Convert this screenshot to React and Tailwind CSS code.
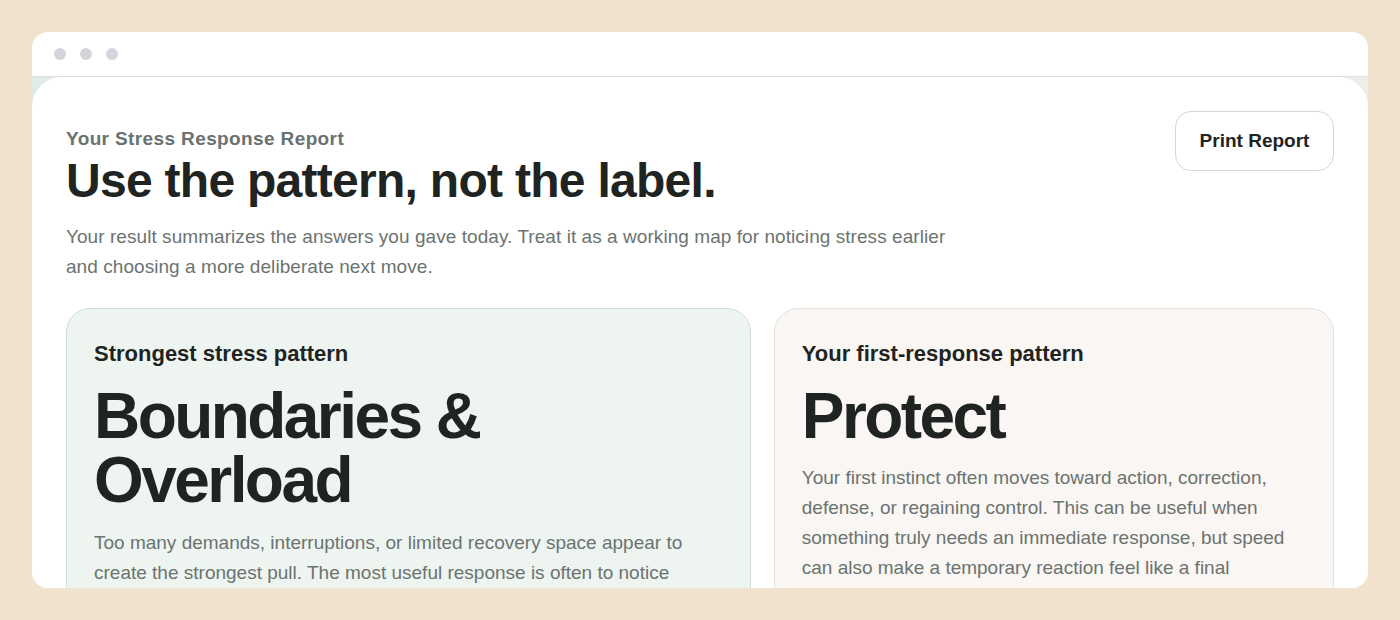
export default function App() {
  return (
    <div className="min-h-screen bg-[#f0e2cd] pt-8 px-8" style={{ fontFamily: '"Liberation Sans", Arial, sans-serif' }}>
      <div className="h-[556px] rounded-2xl overflow-hidden bg-white flex flex-col">
        {/* title bar */}
        <div className="h-[45px] shrink-0 flex items-center gap-[14px] pl-[22px] border-b border-[#dde2df]">
          <span className="w-3 h-3 rounded-full bg-[#d3d4dc]" />
          <span className="w-3 h-3 rounded-full bg-[#d3d4dc]" />
          <span className="w-3 h-3 rounded-full bg-[#d3d4dc]" />
        </div>

        <div className="flex-1 bg-gradient-to-r from-[#e1ebe6] to-[#efedea] overflow-hidden">
          <div className="bg-white rounded-t-[30px] h-full px-[34px] pt-[34px]">
            <div className="flex justify-between items-start">
              <div className="pt-[16px]">
                <div className="text-[19px] leading-6 font-bold tracking-[0.02em] text-[#697270]">Your Stress Response Report</div>
                <h1 className="mt-[4px] text-[48px] leading-[1.1] font-bold tracking-[-0.015em] text-[#1f2422]">
                  Use the pattern, not the label.
                </h1>
                <p className="mt-[14px] max-w-[900px] text-[19px] leading-[30px] tracking-[0.003em] text-[#6b7370]">
                  Your result summarizes the answers you gave today. Treat it as a working map for noticing stress earlier and choosing a more deliberate next move.
                </p>
              </div>
              <button className="h-[60px] w-[159px] rounded-2xl border border-[#d3d8d6] bg-white text-[19px] font-bold text-[#1f2422]">
                Print Report
              </button>
            </div>

            <div className="mt-[26px] grid grid-cols-[11fr_9fr] gap-[23px]">
              <div className="rounded-[24px] border border-[#cfe0d8] bg-[#eef5f1] px-[27px] pt-[31px] pb-8">
                <div className="text-[22px] leading-7 font-bold text-[#1f2422]">Strongest stress pattern</div>
                <div className="mt-[16px] text-[64px] leading-[64px] font-bold tracking-[-0.04em] text-[#1f2422]">
                  Boundaries &amp;<br />Overload
                </div>
                <p className="mt-[16px] max-w-[600px] text-[19px] leading-[30px] text-[#6b7370]">
                  Too many demands, interruptions, or limited recovery space appear to create the strongest pull. The most useful response is often to notice the load early and protect a little room to recover before it builds.
                </p>
              </div>
              <div className="rounded-[24px] border border-[#e7e2da] bg-[#f9f6f3] px-[27px] pt-[31px] pb-8">
                <div className="text-[22px] leading-7 font-bold text-[#1f2422]">Your first-response pattern</div>
                <div className="mt-[16px] text-[64px] leading-[64px] font-bold tracking-[-0.04em] text-[#1f2422]">Protect</div>
                <p className="mt-[15px] text-[19px] leading-[30px] text-[#6b7370]">
                  Your first instinct often moves toward action, correction, defense, or regaining control. This can be useful when something truly needs an immediate response, but speed can also make a temporary reaction feel like a final decision.
                </p>
              </div>
            </div>
          </div>
        </div>
      </div>
    </div>
  );
}
